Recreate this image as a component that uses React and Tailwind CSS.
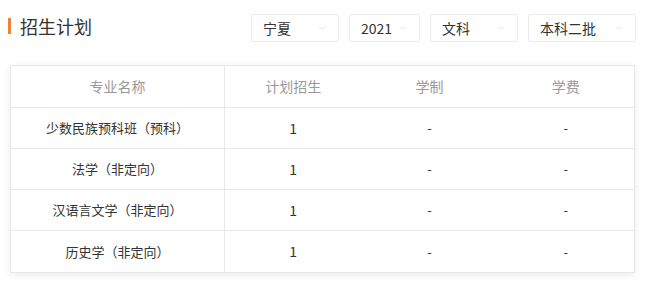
import React from 'react';
import { ChevronDown } from 'lucide-react';

const font = { fontFamily: '"Noto Sans CJK SC", "Noto Sans", sans-serif' };

const filters = [
  { label: '宁夏', width: 'w-[88px]' },
  { label: '2021', width: 'w-[71px]' },
  { label: '文科', width: 'w-[88px]' },
  { label: '本科二批', width: 'w-[108px]' },
];

const rows = [
  { name: '少数民族预科班（预科）', plan: '1', years: '-', fee: '-' },
  { name: '法学（非定向）', plan: '1', years: '-', fee: '-' },
  { name: '汉语言文学（非定向）', plan: '1', years: '-', fee: '-' },
  { name: '历史学（非定向）', plan: '1', years: '-', fee: '-' },
];

const App = () => {
  return (
    <div className="w-[645px] h-[284px] bg-white" style={font}>
      <div className="flex items-center justify-between pl-[8px] pr-[9px] pt-[14px]">
        <div className="flex items-center gap-[9px] -mt-[4px]">
          <span className="w-[3px] h-[16px] bg-[#f0813a]" />
          <span className="text-[18px] leading-[24px] text-[#333]">招生计划</span>
        </div>
        <div className="flex gap-[10px]">
          {filters.map((f) => (
            <div
              key={f.label}
              className={`${f.width} h-[28px] flex items-center justify-between pl-[11px] pr-[10px] border border-[#ebebeb] rounded-[2px] bg-white`}
            >
              <span className="text-[14px] text-[#333]">{f.label}</span>
              <ChevronDown size={12} strokeWidth={1} className="text-[#c8c8c8]" />
            </div>
          ))}
        </div>
      </div>

      <div className="mx-[10px] mt-[23px] w-[625px] border border-[#e8e8e8] bg-white shadow-[0_2px_8px_rgba(0,0,0,0.08)]">
        <div className="grid grid-cols-[214px_1fr_1fr_1fr] h-[42px] border-b border-[#e8e8e8] text-[14px] text-[#999]">
          <div className="flex items-center justify-center border-r border-[#e8e8e8]">专业名称</div>
          <div className="flex items-center justify-center">计划招生</div>
          <div className="flex items-center justify-center">学制</div>
          <div className="flex items-center justify-center">学费</div>
        </div>
        {rows.map((r, i) => (
          <div
            key={i}
            className={`grid grid-cols-[214px_1fr_1fr_1fr] h-[41px] text-[13px] text-[#333] ${i < rows.length - 1 ? 'border-b border-[#e8e8e8]' : ''}`}
          >
            <div className="flex items-center justify-center border-r border-[#e8e8e8]">{r.name}</div>
            <div className="flex items-center justify-center text-[14px]">{r.plan}</div>
            <div className="flex items-center justify-center">{r.years}</div>
            <div className="flex items-center justify-center">{r.fee}</div>
          </div>
        ))}
      </div>
    </div>
  );
};

export default App;
